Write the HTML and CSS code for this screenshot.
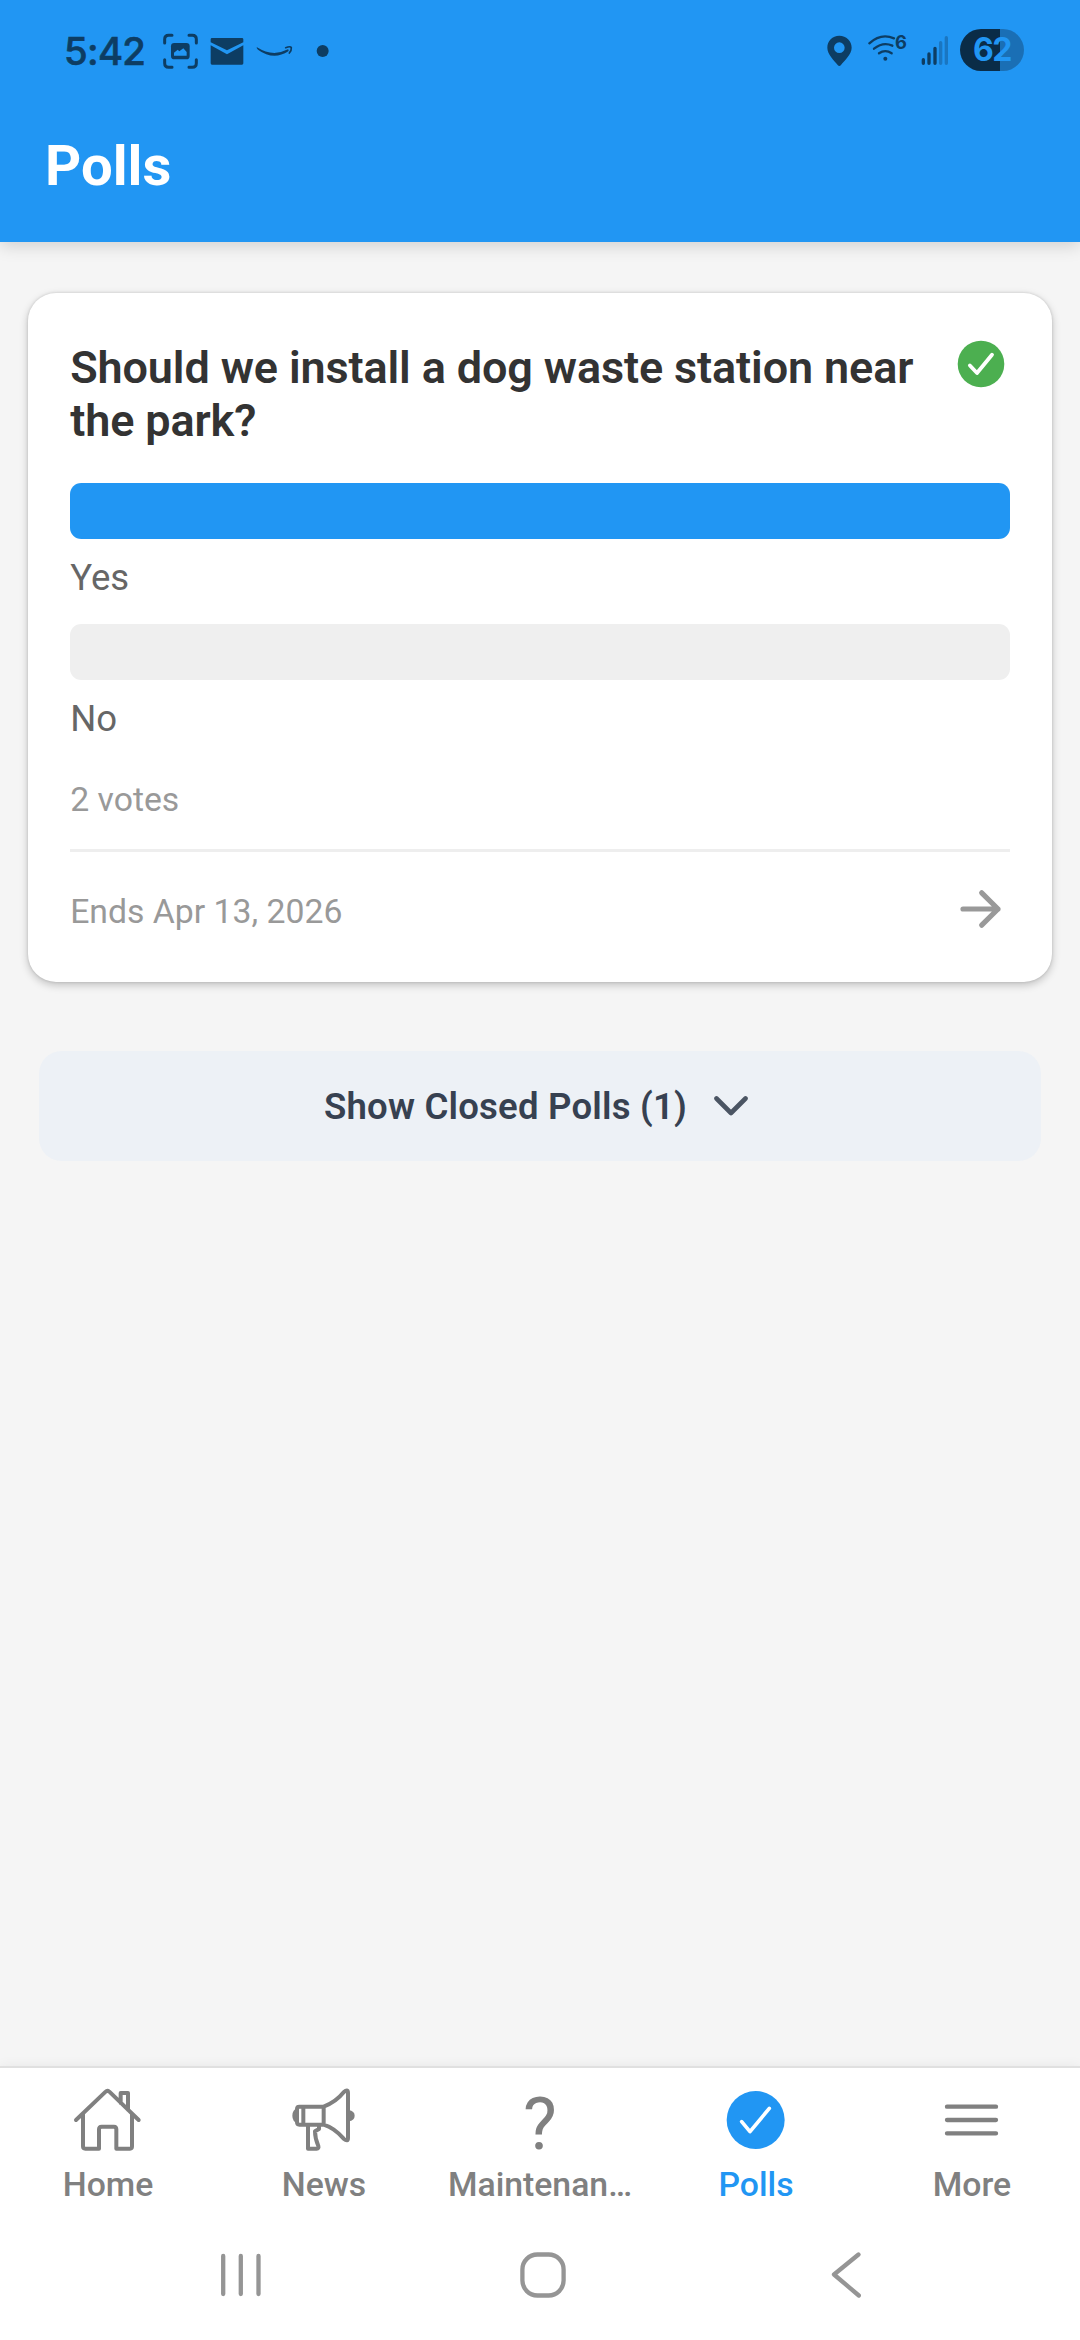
FILE: index.html
```html
<!DOCTYPE html>
<html lang="en">
<head>
<meta charset="utf-8">
<title>Polls</title>
<link rel="stylesheet" href="styles.css">
</head>
<body>
<div class="screen">
  <header class="header">
    <div class="status">
      <div class="status-group">
        <span class="time">5:42</span>
        <svg width="43.33" height="90" viewBox="360 0 130 270">
          <g class="ink-line" stroke-width="9"><path d="M374 99V88Q374 76 386 76H396M447 76H457Q469 76 469 88V99M374 149V160Q374 172 386 172H396M447 172H457Q469 172 469 160V149"/></g>
          <rect class="ink" x="393" y="99" width="56" height="49" rx="10"/>
          <path class="cut" d="M402 137V128L413 119L418 124L430 115L440 126V137Z"/>
        </svg>
        <svg width="46.67" height="90" viewBox="490 0 140 270">
          <path class="ink" d="M513 88Q513 84 517 84H607Q611 84 611 88V97L562 121L513 97ZM513 106L562 133L611 106V160Q611 164 607 164H517Q513 164 513 160Z"/>
        </svg>
        <svg width="53.33" height="90" viewBox="630 0 160 270">
          <path class="ink" d="M651 112Q698 142 744 118Q748 119 745 124Q700 153 654 119Q648 113 651 112Z"/>
          <path class="ink-line" stroke-width="5" d="M737 113Q752 108 754 113Q755 121 748 129"/>
        </svg>
        <svg width="33.33" height="90" viewBox="790 0 100 270"><circle class="ink" cx="849" cy="123" r="18"/></svg>
      </div>
      <div class="status-group">
        <svg width="36.67" height="90" viewBox="70 0 110 270">
          <path class="ink" fill-rule="evenodd" d="M119 77C98 77 83 93 83 113C83 134 104 151 114 165Q119 171 124 165C134 151 156 134 156 113C156 93 140 77 119 77ZM119 97A16 16 0 1 1 119 129A16 16 0 1 1 119 97Z"/>
        </svg>
        <svg width="53.33" height="90" viewBox="180 0 160 270">
          <g class="ink-line" stroke-width="7"><path d="M208 100Q243 68 282 85M222 116Q250 94 277 107M237 130Q256 117 275 130"/></g>
          <circle class="ink" cx="256" cy="146" r="6"/>
          <text class="wifi-gen" x="285" y="117">6</text>
        </svg>
        <svg width="46.67" height="90" viewBox="340 0 140 270">
          <g class="ink-line" stroke-width="10"><path d="M371 149V160M388 132V160M406 115V160"/><path opacity=".35" d="M423 98V160M440 83V160"/></g>
        </svg>
        <span class="battery">62</span>
      </div>
    </div>
    <h1 class="title">Polls</h1>
  </header>

  <main class="content">
    <article class="card">
      <div class="card-head">
        <h2 class="question">Should we install a dog waste station near the park?</h2>
        <svg class="voted" width="56" height="56" viewBox="0 0 56 56">
          <circle cx="28" cy="28" r="23.3" fill="#4caf50"/>
          <path d="M16.9 29.5L24 37L39 18.800" fill="none" stroke="#fff" stroke-width="3.800" stroke-linecap="round" stroke-linejoin="round"/>
        </svg>
      </div>
      <div class="bar"><div class="fill" style="width:100%"></div></div>
      <p class="option">Yes</p>
      <div class="bar"><div class="fill" style="width:0%"></div></div>
      <p class="option">No</p>
      <p class="votes">2 votes</p>
      <footer class="card-foot">
        <span>Ends Apr 13, 2026</span>
        <svg class="go" width="56" height="56" viewBox="0 0 56 56"><path d="M9 28H44M27.700 11.800L44 28L27.700 44.200" fill="none" stroke="#999" stroke-width="5.200" stroke-linecap="round" stroke-linejoin="round"/></svg>
      </footer>
    </article>
    <button class="closed">
      <span>Show Closed Polls (1)</span>
      <svg width="34" height="20" viewBox="0 0 34 20"><path d="M2.500 2.500L17 17L31.500 2.500" fill="none" stroke="#4b5563" stroke-width="4.600" stroke-linecap="round" stroke-linejoin="round"/></svg>
    </button>
  </main>

  <nav class="tabs">
    <a class="tab">
      <svg width="72" height="66" viewBox="96 112 216 198">
        <g class="tab-line"><path d="M108 211L197 126Q202 121 208 126L296 211M129 193V290Q129 297 136 297H177V239Q177 231 185 231H222Q229 231 229 239V297H270Q276 297 276 290V193M242 160V130H264V180"/></g>
      </svg>
      <span>Home</span>
    </a>
    <a class="tab">
      <svg width="72" height="66" viewBox="744 112 216 198">
        <g class="tab-line"><path d="M851 171H778Q771 171 771 178V217Q771 225 778 225H851ZM790 171V225M851 171Q888 157 911 128Q924 116 924 130V265Q924 278 911 267Q882 234 851 225M804 228V297H830Q837 297 835 289Q825 266 825 245L837 238V228"/></g>
        <path class="tab-fill" d="M773 175Q757 180 757 198Q757 216 773 221ZM926 181Q944 184 944 198Q944 212 926 215Z"/>
      </svg>
      <span>News</span>
    </a>
    <a class="tab">
      <i class="tab-question">?</i>
      <span>Maintenan…</span>
    </a>
    <a class="tab tab-active">
      <svg width="72" height="66" viewBox="60 112 216 198">
        <circle class="tab-fill" cx="167" cy="211" r="87"/>
        <path d="M125 216L150 246L208 176" fill="none" stroke="#fff" stroke-width="11" stroke-linecap="round" stroke-linejoin="round"/>
      </svg>
      <span>Polls</span>
    </a>
    <a class="tab">
      <svg width="72" height="66" viewBox="708 112 216 198">
        <g class="tab-line"><path stroke-width="13" d="M741 171H888M741 211H888M741 251H888"/></g>
      </svg>
      <span>More</span>
    </a>
  </nav>

  <div class="system">
    <svg width="60" height="60" viewBox="0 0 60 60"><path d="M12.200 11V49M29.800 11V49M47.500 11V49"/></svg>
    <svg width="60" height="60" viewBox="0 0 60 60"><rect x="9.400" y="9.500" width="41.200" height="41" rx="15"/></svg>
    <svg width="60" height="60" viewBox="0 0 60 60"><path d="M43.500 9.500L19 29.500L43.800 50.500"/></svg>
  </div>
</div>
</body>
</html>
```
FILE: styles.css
```css
* { box-sizing: border-box; }
body { margin: 0; font-family: Roboto, "Liberation Sans", sans-serif; background: #f5f5f5; }
h1, h2, p { margin: 0; }
svg { display: block; flex: none; }

.screen { width: 1080px; height: 2340px; display: flex; flex-direction: column; overflow: hidden; background: #f5f5f5; }

.header { height: 242px; flex: none; padding-top: 10px; background: #2196f3; box-shadow: 0 4px 16px rgba(0, 0, 0, .15); }
.status { height: 90px; padding: 0 56.300px 0 64px; display: flex; justify-content: space-between; }
.status-group { display: flex; align-items: center; color: #0d3d63; }
.time { width: 96px; margin-bottom: 9px; font: 500 38.300px/46px Inter, sans-serif; letter-spacing: -.7px; -webkit-text-stroke: .6px #0d3d63; }
.ink { fill: #0d3d63; }
.ink-line { fill: none; stroke: #0d3d63; stroke-linecap: round; stroke-linejoin: round; }
.cut { fill: #2196f3; }
.wifi-gen { font: 700 55px Inter, sans-serif; fill: #0d3d63; }
.battery { width: 63.700px; height: 42px; margin-bottom: 10px; border-radius: 21px; background: linear-gradient(90deg, #0a2c47 62%, #1a6fb5 62%); color: #2196f3; font: 700 32px/42px Inter, sans-serif; text-align: center; letter-spacing: -1.500px; }
.title { padding: 33px 45px 0; font-size: 56.250px; line-height: 66px; font-weight: 700; color: #fff; }

.content { flex: 1; padding: 50.500px 28px 0; }
.card { height: 689.500px; padding: 42.200px; border-radius: 28px; background: #fff; box-shadow: 0 3px 8px rgba(0, 0, 0, .22), 0 0 3px rgba(0, 0, 0, .14); }
.card-head { display: flex; justify-content: space-between; height: 148.300px; }
.question { width: 860px; padding-top: 6px; font-size: 45px; line-height: 53px; font-weight: 600; letter-spacing: -.13px; color: #333; }
.voted { margin: 1.500px 1px 0 0; }
.bar { height: 56px; border-radius: 11.250px; background: #efefef; overflow: hidden; }
.fill { height: 100%; background: #2196f3; }
.option { height: 85px; padding-top: 17px; font-size: 36.560px; line-height: 44px; color: #666; }
.votes { height: 84.500px; padding-top: 15px; font-size: 33.750px; line-height: 40px; color: #999; }
.card-foot { display: flex; justify-content: space-between; align-items: center; height: 92px; padding-top: 29px; border-top: 3px solid #eee; font-size: 33.750px; line-height: 40px; color: #999; }
.card-foot span { padding-top: 1px; }
.go { margin-bottom: 4px; }
.closed { display: flex; align-items: center; justify-content: center; gap: 27px; width: 1002px; height: 110px; margin: 69px 11px 0; padding: 0 8px 0 0; border: 0; border-radius: 22.500px; background: #edf1f6; font: 600 36.560px/44px Roboto, sans-serif; color: #374151; }
.closed span { padding-top: 2px; letter-spacing: .2px; }

.tabs { flex: none; display: flex; height: 144px; border-top: 2px solid #e0e0e0; background: #fff; box-shadow: 0 0 12px rgba(0, 0, 0, .06); }
.tab { flex: 1; display: flex; flex-direction: column; align-items: center; padding-top: 19.300px; font-size: 33.750px; line-height: 40px; font-weight: 500; color: #808080; }
.tab span { margin-top: 12px; }
.tab-active { color: #2196f3; }
.tab-line { fill: none; stroke: currentColor; stroke-width: 12px; stroke-linecap: round; stroke-linejoin: round; }
.tab-line path[stroke-width] { stroke-width: 13px; }
.tab-fill { fill: currentColor; }
.tab-question { height: 66px; font: 400 71.500px/75px Roboto, sans-serif; }

.system { flex: none; display: flex; justify-content: space-between; height: 130px; padding: 35px 205px 0 211px; background: #fff; }
.system svg { fill: none; stroke: #959595; stroke-width: 4.300px; stroke-linecap: round; stroke-linejoin: round; }
```
